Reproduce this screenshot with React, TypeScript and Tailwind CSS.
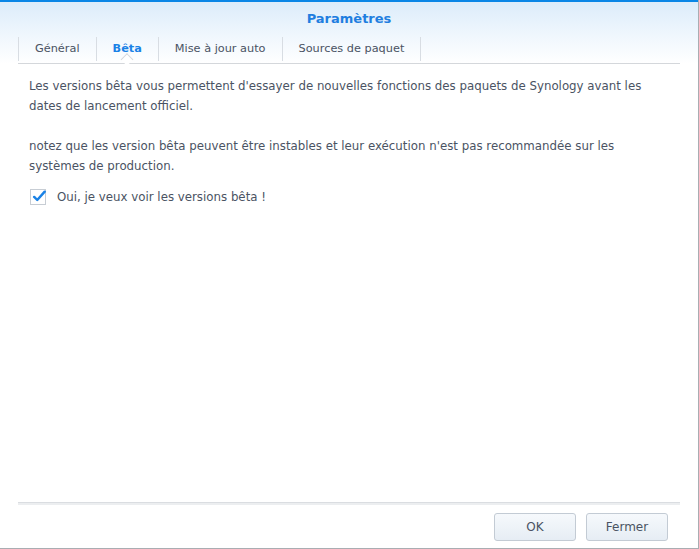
export default function App() {
  const tabs = ['Général', 'Bêta', 'Mise à jour auto', 'Sources de paquet'];
  return (
    <div
      className="relative h-[549px] w-[699px] overflow-hidden border-r border-b border-[#a9adb2] bg-white text-[#4a5363]"
      style={{ fontFamily: "'DejaVu Sans', Verdana, sans-serif" }}
    >
      <div className="h-[64px] border-t-2 border-[#0a86e6] bg-[linear-gradient(180deg,#dcecfa_0%,#eef6fd_50%,#ffffff_100%)]">
        <div className="flex h-[33px] items-center justify-center text-[13px] font-bold text-[#1f7ee0]">
          Paramètres
        </div>
        <div className="mx-[18px] flex h-[29px] items-stretch border-b border-[#d4d7db]">
          {tabs.map((t, i) => (
            <div
              key={t}
              className={
                'relative my-[2px] flex items-center border-l border-[#d8dde3] px-[16px] text-[11.3px] ' +
                (i === 3 ? 'border-r ' : '') +
                (i === 1 ? 'font-bold text-[#1a82e6]' : 'text-[#4a5363]')
              }
            >
              {t}
              {i === 1 && (
                <span className="absolute bottom-[-3px] left-1/2 h-[9px] w-[9px] -translate-x-1/2 rotate-45 border-l border-t border-[#d4d7db] bg-white" />
              )}
            </div>
          ))}
        </div>
      </div>

      <div className="flex h-[438px] flex-col px-[29px] pt-[12px] text-[11.8px] leading-[20px]">
        <p>
          Les versions bêta vous permettent d'essayer de nouvelles fonctions des paquets de Synology avant les dates de
          lancement officiel.
        </p>
        <p className="mt-[20px]">
          notez que les version bêta peuvent être instables et leur exécution n'est pas recommandée sur les systèmes de
          production.
        </p>
        <label className="mt-[11px] flex items-center gap-[11px] pl-[1px]">
          <span className="flex h-[16px] w-[16px] items-center justify-center border border-[#c7cdd4] bg-white">
            <svg viewBox="0 0 16 16" className="h-[19px] w-[19px] -translate-y-[1px] translate-x-[1px]">
              <path d="M2.5 8.5 L6 12 L14.5 2.5" fill="none" stroke="#1a82e6" strokeWidth="2.8" strokeLinecap="round" strokeLinejoin="round" />
            </svg>
          </span>
          <span>Oui, je veux voir les versions bêta !</span>
        </label>
      </div>

      <div className="mx-[18px] h-[3px] border-t border-[#dadde1] bg-[#eceef0]" />
      <div className="flex justify-end gap-[10px] pr-[30px] pt-[8px]">
        <button className="h-[28px] w-[82px] rounded-[3px] border border-[#c3cbd4] bg-[linear-gradient(180deg,#f6f9fc_0%,#e6edf4_100%)] text-[12px] text-[#4a5363]">
          OK
        </button>
        <button className="h-[28px] w-[82px] rounded-[3px] border border-[#c3cbd4] bg-[linear-gradient(180deg,#f6f9fc_0%,#e6edf4_100%)] text-[12px] text-[#4a5363]">
          Fermer
        </button>
      </div>
    </div>
  );
}
